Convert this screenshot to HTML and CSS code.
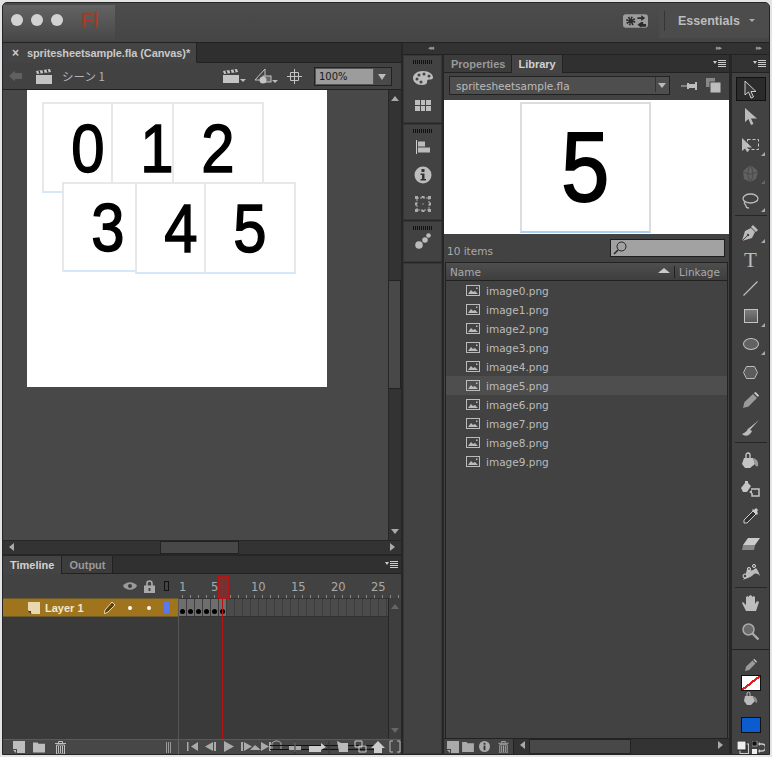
FILE: index.html
```html
<!DOCTYPE html>
<html lang="en">
<head>
    <meta charset="UTF-8">
    <title>Flash Professional</title>
    <link rel="stylesheet" href="styles.css">
</head>
<body>
<div class="window">
    <div class="titlebar">
        <div class="app-block">
            <span class="light"></span><span class="light"></span><span class="light"></span>
            <span class="app-logo">Fl</span>
        </div>
        <div class="title-fill"></div>
        <svg class="sync-icon" width="25" height="14" viewBox="0 0 26 14">
            <rect width="26" height="14" rx="3" fill="#9c9c9c"/>
            <circle cx="8" cy="7" r="3.6" fill="none" stroke="#2c2c2c" stroke-width="2.4" stroke-dasharray="1.6 1.2"/>
            <circle cx="8" cy="7" r="2.6" fill="#2c2c2c"/>
            <path d="M15 3h4V1l4 3-4 3V5h-4zM21 8v2h3v3h-5v1l-4-3 4-3z" fill="#2c2c2c"/>
        </svg>
        <div class="workspace">
            <span class="workspace-name">Essentials</span>
            <span class="workspace-caret"></span>
        </div>
    </div>

    <div class="main">
        <div class="left">
            <div class="doc-tabs">
                <div class="doc-tab"><span class="close">×</span>spritesheetsample.fla (Canvas)*</div>
            </div>
            <div class="doc-toolbar">
                <svg class="back" width="13" height="12" viewBox="0 0 13 12"><path d="M0 6l6-5.500V3h7v6H6v2.500z" fill="#606060"/></svg>
                <svg class="clapper" width="16" height="15" viewBox="0 0 16 15"><path d="M0 6h16v9H0z" fill="#c4c4c4"/><path d="M0 2l14-2 1 3L1 5z" fill="#c4c4c4"/><path d="M3 1.600l1 3M7 1l1 3M11 .4l1 3" stroke="#333" stroke-width="1.400"/></svg>
                <span class="scene-name">シーン 1</span>
                <div class="doc-tools">
                    <span class="drop">
                        <svg width="18" height="14" viewBox="0 0 16 14"><path d="M0 6h16v8H0z" fill="#c4c4c4"/><path d="M0 2l14-2 1 3L1 5z" fill="#c4c4c4"/><path d="M3 1.600l1 3M7 1l1 3M11 .4l1 3" stroke="#333" stroke-width="1.400"/></svg>
                    </span>
                    <span class="drop">
                        <svg width="18" height="16" viewBox="0 0 18 16"><path d="M1 12L11 1v11z" fill="none" stroke="#c4c4c4"/><rect x="9" y="8" width="8" height="6" fill="#666" stroke="#c4c4c4"/><circle cx="9" cy="12" r="3.500" fill="#c4c4c4"/></svg>
                    </span>
                    <svg class="crosshair" width="15" height="15" viewBox="0 0 15 15"><path d="M7.500 0v15M0 7.500h15M3.500 3.500h8v8h-8z" fill="none" stroke="#c4c4c4"/></svg>
                    <div class="zoom-box">
                        <span class="zoom-value">100%</span>
                        <span class="zoom-arrow"></span>
                    </div>
                </div>
            </div>

            <div class="stage-row">
                <div class="stage-area">
                    <div class="stage">
                        <div class="sprite sprite-0"><span class="digit">0</span></div>
                        <div class="sprite sprite-1"><span class="digit">1</span></div>
                        <div class="sprite sprite-2"><span class="digit">2</span></div>
                        <div class="sprite sprite-3"><span class="digit">3</span></div>
                        <div class="sprite sprite-4"><span class="digit">4</span></div>
                        <div class="sprite sprite-5"><span class="digit">5</span></div>
                    </div>
                </div>
                <div class="vscroll">
                    <span class="arrow-up"></span>
                    <span class="vscroll-thumb stage-thumb"></span>
                    <span class="arrow-down"></span>
                </div>
            </div>
            <div class="hscroll">
                <span class="arrow-left"></span>
                <span class="hscroll-thumb stage-hthumb"></span>
                <span class="arrow-right"></span>
            </div>

            <div class="timeline">
                <div class="panel-tabs">
                    <span class="panel-tab active">Timeline</span>
                    <span class="panel-tab">Output</span>
                    <span class="panel-menu"></span>
                </div>
                <div class="tl-header">
                    <div class="tl-header-icons">
                        <svg width="14" height="10" viewBox="0 0 14 10"><path d="M0 5C3 0 11 0 14 5 11 10 3 10 0 5z" fill="#9a9a9a"/><circle cx="7" cy="5" r="2" fill="#3a3a3a"/></svg>
                        <svg width="11" height="13" viewBox="0 0 11 13"><path d="M3 6V3.500a2.500 2.500 0 0 1 5 0V6" fill="none" stroke="#aaa" stroke-width="1.600"/><rect y="5.500" width="11" height="7.500" fill="#aaa"/><rect x="4.500" y="8" width="2" height="3" fill="#444"/></svg>
                        <span class="outline-icon"></span>
                    </div>
                    <div class="ruler">
                        <span class="ruler-first">1</span><span class="ruler-num">5</span><span class="ruler-num">10</span><span class="ruler-num">15</span><span class="ruler-num">20</span><span class="ruler-num">25</span>
                    </div>
                </div>
                <div class="tl-body">
                    <div class="layers">
                        <div class="layer-row">
                            <svg class="layer-icon" width="12" height="12" viewBox="0 0 12 12"><path d="M0 0h12v12H4L0 8z" fill="#e8d8b0"/><path d="M0 9h3v3z" fill="#3a3a3a"/></svg>
                            <span class="layer-name">Layer 1</span>
                            <svg class="layer-pencil" width="12" height="13" viewBox="0 0 12 13"><path d="M0 13l1-4 7-8 3 3-7 7z" fill="#5c4310" stroke="#e8d8b0"/></svg>
                            <span class="layer-dot first"></span>
                            <span class="layer-dot"></span>
                            <span class="layer-color"></span>
                        </div>
                    </div>
                    <div class="frames">
                        <div class="frame-row">
                            <span class="frame"></span><span class="frame"></span><span class="frame"></span>
                            <span class="frame"></span><span class="frame"></span><span class="frame"></span>
                        </div>
                    </div>
                    <div class="vscroll tl-scroll">
                        <span class="arrow-up dim"></span>
                        <span class="arrow-down dim"></span>
                    </div>
                    <div class="playhead"></div>
                </div>
                <div class="tl-footer">
                    <div class="tl-footer-left">
                        <svg width="12" height="12" viewBox="0 0 12 12"><path d="M0 0h12v12H4v-4H0z" fill="#bdbdbd"/><path d="M0 9h3v3z" fill="#bdbdbd"/></svg>
                        <svg width="12" height="11" viewBox="0 0 13 11"><path d="M0 0h5l1 1.500h7V11H0z" fill="#bdbdbd"/></svg>
                        <svg class="trash" width="11" height="13" viewBox="0 0 11 13"><path d="M3.500 2V.5h4V2M0 2.500h11M1.500 4h8v9h-8zM3.500 5v7M5.500 5v7M7.500 5v7" fill="none" stroke="#bdbdbd"/></svg>
                        <svg class="handle" width="5" height="11" viewBox="0 0 5 11"><path d="M.5 0v11M2.500 0v11M4.500 0v11" stroke="#999"/></svg>
                    </div>
                    <svg class="transport" width="222" height="16" viewBox="0 0 222 16">
                        <path d="M8 3h1.500v9H8zM19 3v9l-7-4.500z" fill="#aaa"/>
                        <path d="M26 7.500l8-4.500v9zM35 3h2v9h-2z" fill="#aaa"/>
                        <path d="M45 2l10 5.500L45 13z" fill="#aaa"/>
                        <path d="M62 3h2v9h-2zM65 3l8 4.500L65 12zM71 11l5-5 6 5zM82 3l8 4.500L82 12zM90 3h2v9h-2z" fill="#aaa"/>
                        <path d="M93 10V4l3-2h3l3 2v6" fill="none" stroke="#aaa"/>
                        <path d="M91 10.500h111" stroke="#111" stroke-width="1.200"/>
                        <path d="M91 6.500h111" stroke="#111"/>
                        <path d="M110 7h12v4h-12zM115.500 3h1v10h-1z" fill="#aaa"/>
                        <path d="M130 7h12V4l5 4-5 3v2h-12z" fill="#ccc"/>
                        <path d="M116 2v13M150 2v13" stroke="#333"/>
                        <path d="M158 2l4 2h7v9h-9z" fill="#bbb"/>
                        <path d="M176 2h7v6h-7zM180 7h7v6h-7z" fill="none" stroke="#ccc"/>
                        <path d="M192 9l7-7 7 7h-3v5h-8V9z" fill="#ccc"/>
                        <path d="M214 2h-3v11h3M218 2h3v11h-3" fill="none" stroke="#bbb"/>
                    </svg>
                </div>
            </div>
        </div>

        <div class="right">
            <div class="collapse-strip">
                <span class="chev chev-dock">◂◂</span>
                <span class="chev chev-lib">▸▸</span>
                <span class="chev chev-tools">▸▸</span>
            </div>
            <div class="panels">
                <div class="dock">
                    <div class="dock-group dock-group-a">
                        <span class="gripper"></span>
                        <svg width="20" height="14" viewBox="0 0 20 14"><path d="M10 0c6 0 10 3 10 6.500 0 2-2 2-4 2-2 0-2 1.500-2 3S12 14 9 14C3 14 0 10.500 0 7S4 0 10 0z" fill="#bdbdbd"/><g fill="#444"><circle cx="6" cy="4" r="1.500"/><circle cx="11" cy="3" r="1.500"/><circle cx="16" cy="5" r="1.500"/><circle cx="4" cy="8" r="1.500"/><circle cx="8" cy="11" r="1.500"/></g></svg>
                        <svg width="16" height="11" viewBox="0 0 16 11"><rect width="16" height="11" fill="#bdbdbd"/><path d="M5.500 0v11M10.500 0v11M0 5.500h16" stroke="#444"/></svg>
                    </div>
                    <div class="dock-group dock-group-b">
                        <span class="gripper"></span>
                        <svg width="14" height="14" viewBox="0 0 14 14"><path d="M.5 0v14" stroke="#ccc"/><rect x="2" y="1.500" width="7" height="5" fill="#bbb"/><rect x="2" y="7.500" width="12" height="5" fill="#bbb"/></svg>
                        <svg width="18" height="18" viewBox="0 0 18 18"><circle cx="9" cy="9" r="8.500" fill="#bdbdbd"/><rect x="7.500" y="3" width="3" height="3" fill="#333"/><path d="M6.500 7.500h4V13h1.500v1.500H6.500V13H8V9H6.500z" fill="#333"/></svg>
                        <svg width="16" height="16" viewBox="0 0 16 16"><rect x="2" y="2" width="12" height="12" fill="none" stroke="#aaa" stroke-dasharray="2 1"/><path d="M0 0h3v3H0zM13 0h3v3h-3zM0 13h3v3H0zM13 13h3v3h-3zM6.500 0h3v2h-3zM6.500 14h3v2h-3zM0 6.500h2v3H0zM14 6.500h2v3h-2z" fill="#aaa"/><rect x="7.500" y="7.500" width="1" height="1" fill="#ddd"/></svg>
                    </div>
                    <div class="dock-group dock-group-c">
                        <span class="gripper"></span>
                        <svg width="16" height="16" viewBox="0 0 16 16"><circle cx="4" cy="12" r="3.800" fill="#bbb"/><circle cx="10" cy="7" r="2.800" fill="#bbb"/><circle cx="13.500" cy="2.500" r="2.300" fill="#bbb"/></svg>
                    </div>
                    <div class="dock-group dock-rest"></div>
                </div>

                <div class="library">
                    <div class="panel-tabs">
                        <span class="panel-tab">Properties</span>
                        <span class="panel-tab active">Library</span>
                        <span class="panel-menu"></span>
                    </div>
                    <div class="lib-select-row">
                        <div class="lib-select">
                            <span class="lib-select-name">spritesheetsample.fla</span>
                            <span class="lib-select-arrow"></span>
                        </div>
                        <svg width="16" height="8" viewBox="0 0 16 8"><path d="M0 3.500h6v1H0zM6 1h2v6H6zM8 2h6v4H8zM14 0h2v8h-2z" fill="#bdbdbd"/></svg>
                        <svg width="15" height="15" viewBox="0 0 15 15"><rect width="9" height="9" fill="#888"/><rect x="4" y="4" width="11" height="11" fill="#bdbdbd" stroke="#444"/></svg>
                    </div>
                    <div class="lib-preview">
                        <div class="preview-sprite"><span class="digit">5</span></div>
                    </div>
                    <div class="lib-count-row">
                        <span class="lib-count">10 items</span>
                        <div class="lib-search">
                            <svg width="14" height="14" viewBox="0 0 14 14"><circle cx="8.500" cy="5.500" r="4.500" fill="none" stroke="#222"/><path d="M5 9l-4 4" stroke="#222" stroke-width="1.500"/></svg>
                        </div>
                    </div>
                    <div class="lib-list">
                        <div class="lib-head">
                            <span class="lib-head-name">Name</span>
                            <span class="sort-arrow"></span>
                            <span class="lib-head-link">Linkage</span>
                        </div>
                        <div class="lib-items" id="lib-items"></div>
                    </div>
                    <div class="lib-footer">
                        <svg width="12" height="12" viewBox="0 0 12 12"><path d="M0 0h12v12H4v-4H0z" fill="#aaa"/><path d="M0 9h3v3z" fill="#aaa"/></svg>
                        <svg class="lib-folder" width="12" height="10" viewBox="0 0 13 11"><path d="M0 0h5l1 1.500h7V11H0z" fill="#aaa"/></svg>
                        <svg width="11" height="11" viewBox="0 0 18 18"><circle cx="9" cy="9" r="9" fill="#aaa"/><rect x="7.500" y="3" width="3" height="3" fill="#333"/><rect x="7.500" y="7.500" width="3" height="7.500" fill="#333"/></svg>
                        <svg class="lib-trash" width="11" height="12" viewBox="0 0 11 13"><path d="M3.500 2V.5h4V2M0 2.500h11M1.500 4h8v9h-8zM3.500 5v7M5.500 5v7M7.500 5v7" fill="none" stroke="#aaa"/></svg>
                        <div class="hscroll lib-hscroll">
                            <span class="arrow-left"></span>
                            <span class="hscroll-thumb lib-hthumb"></span>
                            <span class="arrow-right"></span>
                        </div>
                    </div>
                </div>

                <div class="tools">
                    <div class="tools-head"><span class="panel-menu"></span></div>
                    <div class="tool active">
                        <svg width="13" height="19" viewBox="0 0 13 19"><path d="M1 1v14l3.500-3 2.500 6 2.500-1-2.500-5.500H12z" fill="#3a3a3a" stroke="#ccc"/></svg>
                    </div>
                    <div class="tool"><svg width="12" height="18" viewBox="0 0 12 18"><path d="M0 0v14l3.500-3 2.500 6 2.500-1L6 10.500h6z" fill="#bbb"/></svg></div>
                    <div class="tool corner">
                        <svg width="18" height="14" viewBox="0 0 18 14"><path d="M0 0v13l3-2.500L5 14l2-1-2-3.500h5z" fill="#bbb"/><rect x="5.500" y="1.500" width="11" height="10" fill="none" stroke="#ccc" stroke-dasharray="3 2"/></svg>
                    </div>
                    <div class="tool corner dim-corner">
                        <svg width="15" height="17" viewBox="0 0 15 17"><path d="M7.500 0L15 6l-2 8-5.500 3L1 14 0 6z" fill="#616161"/><path d="M0 6c4 4 10 4 15 0M7.500 0C4 5 4 12 7.500 17M7.500 0c3 5 3 12 0 17" fill="none" stroke="#4a4a4a"/></svg>
                    </div>
                    <div class="tool corner">
                        <svg width="17" height="16" viewBox="0 0 17 16"><ellipse cx="8.500" cy="5.500" rx="7.500" ry="4.500" fill="none" stroke="#bbb" stroke-width="1.300"/><path d="M3 9c-2 2 1 2 1 4 0 1.500 2 2 3 2" fill="none" stroke="#bbb" stroke-width="1.300"/></svg>
                    </div>
                    <div class="tool-sep after-select"></div>
                    <div class="tool corner">
                        <svg width="17" height="17" viewBox="0 0 17 17"><path d="M0 17L3 7l6-3 4 4-3 6z" fill="#bbb"/><path d="M11 1l5 5-2 2-5-5z" fill="#bbb"/><path d="M0 17l5-5" stroke="#444"/><circle cx="6" cy="11" r="1.200" fill="#444"/></svg>
                    </div>
                    <div class="tool"><span class="tool-text">T</span></div>
                    <div class="tool"><svg width="15" height="15" viewBox="0 0 15 15"><path d="M.5 14.500l14-14" stroke="#bbb" stroke-width="1.300"/></svg></div>
                    <div class="tool corner"><span class="rect-tool"></span></div>
                    <div class="tool corner"><span class="oval-tool"></span></div>
                    <div class="tool"><svg width="15" height="13" viewBox="0 0 15 13"><path d="M3.500.5h8L14.500 6.500l-3 6h-8l-3-6z" fill="#5c5c5c" stroke="#bbb"/></svg></div>
                    <div class="tool"><svg width="16" height="16" viewBox="0 0 16 16"><path d="M0 16l1.500-6L10 2l4 4-8.500 8.500z" fill="#9a9a9a"/><path d="M11 1l1.500-1L16 3.500 15 5z" fill="#d4d4d4"/></svg></div>
                    <div class="tool"><svg width="18" height="17" viewBox="0 0 18 17"><path d="M17 0L8 10l-2-1z" fill="#bbb"/><path d="M6 8.500c-1 3-3 4-6 5.500 3 3 8 2 10-3z" fill="#bbb"/></svg></div>
                    <div class="tool-sep after-draw"></div>
                    <div class="tool"><svg width="17" height="17" viewBox="0 0 17 17"><path d="M4 6V3a2 2 0 0 1 4 0v3" fill="none" stroke="#ccc" stroke-width="1.300"/><path d="M2 6h9l2 6-5 4H3L0 12z" fill="#c4c4c4"/><path d="M11 6c4 1 6 4 5 8-1 1-3 0-3-2z" fill="#999"/></svg></div>
                    <div class="tool"><svg width="19" height="17" viewBox="0 0 19 17"><path d="M4 3V1h3v2l3 3-4 6H2L0 8z" fill="#c4c4c4"/><path d="M10 9h8v7h-7v-3" fill="none" stroke="#c4c4c4" stroke-width="1.500"/><path d="M8 12l3-2v4z" fill="#c4c4c4"/></svg></div>
                    <div class="tool"><svg width="16" height="16" viewBox="0 0 16 16"><path d="M10 3L13 6 4 15H1v-3z" fill="#333" stroke="#ccc"/><path d="M9 2l5 5 1-2-1-1 1-2-2-2-2 2-1-1z" fill="#ccc"/></svg></div>
                    <div class="tool"><svg width="18" height="12" viewBox="0 0 18 12"><path d="M6 0h12l-5 7H1z" fill="#ccc"/><path d="M1 7h12l-1 5H0z" fill="#888"/></svg></div>
                    <div class="tool"><svg width="18" height="17" viewBox="0 0 18 17"><path d="M1 16C4 12 4 7 6 3c2 3 3 4 5 3l3-2c2 2 3 5 4 8-3-3-5-3-7-1-3 3-6 3-10 5z" fill="#bbb"/><circle cx="3" cy="12" r="2" fill="#444" stroke="#ddd"/><circle cx="7" cy="5" r="1.500" fill="#444" stroke="#ddd"/><circle cx="12" cy="2" r="1.500" fill="#444" stroke="#ddd"/></svg></div>
                    <div class="tool-sep after-edit"></div>
                    <div class="tool"><svg width="17" height="17" viewBox="0 0 17 17"><path d="M4 16L0 8l1-1 3 3V2l1.500-1L7 2v6V1l1.500-1L10 1v7V2l1.500-1L13 2v7l2-3 2 1-3 9z" fill="#bdbdbd"/></svg></div>
                    <div class="tool"><svg width="17" height="17" viewBox="0 0 17 17"><circle cx="6.500" cy="6.500" r="5.500" fill="#6a6a6a" stroke="#aaa" stroke-width="1.500"/><path d="M10.500 10.500l6 6" stroke="#aaa" stroke-width="2.400"/></svg></div>
                    <div class="tool-sep black"></div>
                    <div class="color-tool stroke-tool">
                        <svg width="12" height="12" viewBox="0 0 16 16"><path d="M0 16l1.500-6L10 2l4 4-8.500 8.500z" fill="#9a9a9a"/><path d="M11 1l1.500-1L16 3.500 15 5z" fill="#d4d4d4"/></svg>
                        <span class="swatch stroke-swatch"></span>
                    </div>
                    <div class="color-tool fill-tool">
                        <svg width="14" height="14" viewBox="0 0 14 14"><path d="M3 5V2a2 2 0 0 1 3 0v3" fill="none" stroke="#bbb"/><path d="M1 5h8l2 5-4 4H3L0 10z" fill="#bbb"/><path d="M9 5c3 1 5 3 4 7-1 0-2-1-2-2z" fill="#888"/></svg>
                        <span class="swatch fill-swatch"></span>
                    </div>
                    <div class="color-footer">
                        <svg width="12" height="13" viewBox="0 0 12 13"><rect x="3" y="3" width="8.500" height="9.500" fill="none" stroke="#ccc"/><rect width="9" height="9" fill="#eee" stroke="#222"/></svg>
                        <svg width="13" height="14" viewBox="0 0 13 14"><rect width="5" height="5" fill="#111" stroke="#ccc" stroke-width=".6"/><rect y="8" width="5" height="6" fill="#eee"/><path d="M7 3h3a3 3 0 0 1 0 7H7" fill="none" stroke="#ccc" stroke-width="1.400"/><path d="M6 3l2-2v4zM6 10l2-2v4z" fill="#ccc"/></svg>
                    </div>
                </div>
            </div>
        </div>
    </div>
</div>

<script>
    // library rows
    var list = document.getElementById('lib-items');
    for (var i = 0; i < 10; i++) {
        var row = document.createElement('div');
        row.className = i === 5 ? 'lib-item selected' : 'lib-item';
        row.innerHTML = '<svg width="14" height="11" viewBox="0 0 14 11"><rect x=".5" y=".5" width="13" height="10" fill="none" stroke="#bbb"/><path d="M2 9l3-4 2 2 2-1 3 3z" fill="#bbb"/><rect x="10" y="2.500" width="1.500" height="1.500" fill="#bbb"/></svg>' +
            '<span>image' + i + '.png</span>';
        list.appendChild(row);
    }
</script>
</body>
</html>
```

FILE: styles.css
```css
* {
    box-sizing: border-box;
}

html, body {
    margin: 0;
    height: 757px;
    overflow: hidden;
}

body {
    background: #e4e4e4;
    padding: 2px;
    font-family: "DejaVu Sans", sans-serif;
    font-size: 10.5px;
    color: #bdbdbd;
}

.window {
    width: 768px;
    height: 753px;
    border: 1px solid #262626;
    border-radius: 5px 5px 0 0;
    background: #262626;
    overflow: hidden;
    display: flex;
    flex-direction: column;
}

/* title bar */
.titlebar {
    height: 40px;
    flex: none;
    display: flex;
    align-items: flex-start;
    background: linear-gradient(#4c4c4c, #454545);
    border-bottom: 1px solid #222;
}

.app-block {
    width: 112px;
    height: 35px;
    margin-top: 2px;
    padding-left: 8px;
    display: flex;
    align-items: center;
    gap: 8px;
    background: linear-gradient(#636363, #484848);
}

.light {
    width: 12px;
    height: 12px;
    margin-top: -5px;
    border-radius: 50%;
    background: #d2d2d2;
}

.app-logo {
    margin-left: 10px;
    margin-top: -5px;
    font-family: "Liberation Sans", sans-serif;
    font-size: 21px;
    color: #a63a22;
    -webkit-text-stroke: 0.5px #a63a22;
}

.title-fill {
    flex: 1;
}

.sync-icon {
    margin-top: 11px;
    margin-right: 11px;
}

.workspace {
    width: 110px;
    height: 35px;
    display: flex;
    align-items: center;
    padding: 0 0 0 19px;
    position: relative;
    background: #4c4c4c;
}

.workspace::before {
    content: "";
    position: absolute;
    left: 5px;
    top: 8px;
    height: 20px;
    border-left: 1px solid #363636;
}

.workspace-name {
    font-family: "Liberation Sans", sans-serif;
    font-size: 12.5px;
    font-weight: bold;
    color: #bcbcbc;
}

.workspace-caret {
    margin-left: 9px;
    margin-top: 3px;
    border: 3px solid transparent;
    border-top-color: #aaa;
}

.main {
    flex: 1;
    display: flex;
    min-height: 0;
}

/* left column */
.left {
    width: 398px;
    flex: none;
    display: flex;
    flex-direction: column;
    margin-right: 2px;
}

.doc-tabs {
    height: 20px;
    flex: none;
    background: #2f2f2f;
    border-bottom: 1px solid #222;
}

.doc-tab {
    width: 194px;
    height: 20px;
    padding-left: 9px;
    display: flex;
    align-items: center;
    gap: 8px;
    background: #444;
    border-right: 1px solid #222;
    border-bottom: 1px solid #444;
    font-family: "Liberation Sans", sans-serif;
    font-size: 11px;
    font-weight: bold;
    letter-spacing: -0.1px;
    color: #c8c8c8;
    white-space: nowrap;
}

.close {
    font-size: 12px;
    color: #ccc;
}

.doc-toolbar {
    height: 27px;
    flex: none;
    display: flex;
    align-items: center;
    padding-left: 6px;
    background: #424242;
    border-bottom: 1px solid #222;
}

.clapper {
    margin-left: 14px;
}

.scene-name {
    margin-left: 10px;
    font-family: "Noto Sans CJK JP", "DejaVu Sans", sans-serif;
    font-size: 11.5px;
    color: #b4b4b4;
}

.doc-tools {
    margin-left: auto;
    margin-right: 9px;
    display: flex;
    align-items: center;
}

.drop {
    position: relative;
    margin-right: 14px;
    display: flex;
}

.drop::after {
    content: "";
    position: absolute;
    right: -6px;
    bottom: -2px;
    border: 3px solid transparent;
    border-top-color: #bbb;
}

.crosshair {
    margin-left: 1px;
}

.zoom-box {
    width: 78px;
    height: 19px;
    margin-left: 12px;
    display: flex;
    border: 1px solid #222;
}

.zoom-value {
    flex: 1;
    padding-left: 3px;
    background: #9c9c9c;
    color: #1a1a1a;
    font-size: 10px;
    line-height: 16px;
    border: 1px solid #555;
}

.zoom-arrow {
    width: 17px;
    background: #4a4a4a;
    position: relative;
}

.zoom-arrow::after {
    content: "";
    position: absolute;
    left: 4px;
    top: 6px;
    border: 4px solid transparent;
    border-top: 6px solid #bbb;
}

.stage-row {
    height: 450px;
    flex: none;
    display: flex;
}

.stage-area {
    flex: 1;
    background: #484848;
    padding-left: 24px;
}

.stage {
    width: 300px;
    height: 297px;
    background: #fff;
    position: relative;
}

.sprite {
    position: absolute;
    width: 92px;
    height: 91px;
    display: flex;
    align-items: center;
    justify-content: center;
    background: #fff;
    border: 2px solid #e8e8e8;
    border-bottom-color: #d6e8f8;
    font-family: "Liberation Sans", sans-serif;
    font-size: 68px;
    color: #000;
    -webkit-text-stroke: 1.5px #000;
}

.digit {
    display: inline-block;
    transform: scaleX(0.88);
}

.sprite-0 { left: 15px; top: 12px; }
.sprite-1 { left: 84px; top: 12px; }
.sprite-2 { left: 145px; top: 12px; }
.sprite-3 { left: 35px; top: 92px; height: 90px; }
.sprite-4 { left: 108px; top: 92px; height: 92px; }
.sprite-5 { left: 177px; top: 92px; height: 92px; }

/* scrollbars */
.vscroll {
    width: 13px;
    flex: none;
    display: flex;
    flex-direction: column;
    align-items: center;
    background: #333;
    border-left: 1px solid #262626;
    position: relative;
}

.vscroll-thumb {
    width: 100%;
    background: #484848;
    border: 1px solid #222;
    border-left: 0;
}

.stage-thumb {
    position: absolute;
    top: 190px;
    height: 109px;
}

.arrow-up, .arrow-down {
    position: absolute;
    border: 4px solid transparent;
}

.arrow-up {
    top: 2px;
    border-bottom: 5px solid #aaa;
}

.arrow-down {
    bottom: 2px;
    border-top: 5px solid #aaa;
}

.arrow-up.dim {
    border-bottom-color: #666;
}

.arrow-down.dim {
    border-top-color: #666;
}

.hscroll {
    height: 14px;
    flex: none;
    background: #333;
    border-top: 1px solid #262626;
    position: relative;
}

.hscroll-thumb {
    position: absolute;
    top: 0;
    height: 100%;
    background: #484848;
    border: 1px solid #222;
}

.stage-hthumb {
    left: 157px;
    width: 79px;
}

.arrow-left, .arrow-right {
    position: absolute;
    top: 2px;
    border: 4px solid transparent;
}

.arrow-left {
    left: 2px;
    border-right: 5px solid #aaa;
}

.arrow-right {
    right: 2px;
    border-left: 5px solid #aaa;
}

/* timeline */
.timeline {
    flex: 1;
    margin-top: 2px;
    display: flex;
    flex-direction: column;
    min-height: 0;
}

.panel-tabs {
    height: 18px;
    flex: none;
    display: flex;
    background: #303030;
    border-bottom: 1px solid #222;
    position: relative;
}

.panel-tab {
    padding: 0 7px;
    display: flex;
    align-items: center;
    font-family: "Liberation Sans", sans-serif;
    font-size: 11px;
    font-weight: bold;
    color: #999;
    background: #3c3c3c;
    border-right: 1px solid #222;
}

.panel-tab.active {
    height: 18px;
    background: #444;
    color: #d2d2d2;
}

.library .panel-tab {
    padding: 0 6px;
}

.library .panel-tab:first-child {
    padding-left: 7px;
}

.panel-menu {
    position: absolute;
    right: 3px;
    top: 5px;
    width: 8px;
    height: 7px;
    background: repeating-linear-gradient(#ccc 0, #ccc 1px, transparent 1px, transparent 2px);
}

.panel-menu::before {
    content: "";
    position: absolute;
    left: -5px;
    top: 1px;
    border: 2px solid transparent;
    border-top: 3px solid #ccc;
}

.tl-header {
    height: 24px;
    flex: none;
    display: flex;
    background: #424242;
}

.tl-header-icons {
    width: 176px;
    flex: none;
    padding-right: 10px;
    display: flex;
    align-items: center;
    justify-content: flex-end;
    gap: 7px;
}

.outline-icon {
    width: 5px;
    height: 10px;
    margin-left: 2px;
    border: 1px solid #111;
}

.ruler {
    flex: 1;
    min-width: 0;
    display: flex;
    align-items: flex-start;
    padding-top: 6px;
    font-size: 11.5px;
    color: #aaa;
    background: repeating-linear-gradient(90deg, #888 0, #888 1px, transparent 1px, transparent 8px) 3px 100% / 100% 3px no-repeat;
}

.ruler-first {
    width: 32px;
    flex: none;
}

.ruler-num {
    width: 40px;
    flex: none;
}

.tl-body {
    flex: 1;
    display: flex;
    position: relative;
    background: #3a3a3a;
    min-height: 0;
}

.layers {
    width: 176px;
    flex: none;
    border-right: 1px solid #555;
}

.layer-row {
    height: 19px;
    display: flex;
    align-items: center;
    padding-left: 25px;
    background: #a0741c;
    border-bottom: 1px solid #6b5a2c;
    border-top: 1px solid #6b5a2c;
}

.layer-name {
    width: 59px;
    margin-left: 5px;
    font-family: "Liberation Sans", sans-serif;
    font-size: 11px;
    font-weight: bold;
    color: #f1e8d2;
}

.layer-dot {
    width: 4px;
    height: 4px;
    margin-left: 15px;
    border-radius: 50%;
    background: #fff;
}

.layer-dot.first {
    margin-left: 12px;
}

.layer-color {
    width: 5px;
    height: 11px;
    margin-left: 13px;
    background: #5a78f0;
}

.frames {
    flex: 1;
    min-width: 0;
}

.frame-row {
    height: 19px;
    display: flex;
    background: repeating-linear-gradient(90deg, #4b4b4b 0, #4b4b4b 7px, #3d3d3d 7px, #3d3d3d 8px);
    border-top: 1px solid #333;
    border-bottom: 1px solid #333;
}

.frame {
    width: 8px;
    height: 100%;
    background: #6e6e6e;
    border-right: 1px solid #3d3d3d;
    position: relative;
}

.frame::after {
    content: "";
    position: absolute;
    left: 1px;
    bottom: 2px;
    width: 5px;
    height: 5px;
    border-radius: 50%;
    background: #000;
}

.tl-scroll {
    background: #3e3e3e;
}

.playhead {
    position: absolute;
    left: 219px;
    top: -22px;
    bottom: 0;
    width: 1px;
    background: #b51414;
}

.playhead::before {
    content: "";
    position: absolute;
    left: -4px;
    top: 0;
    width: 9px;
    height: 21px;
    background: rgba(120, 50, 50, 0.9);
    border: 1px solid #b51414;
}

.tl-footer {
    height: 15px;
    flex: none;
    display: flex;
    align-items: center;
    background: #474747;
    border-top: 1px solid #5a5a5a;
}

.tl-footer-left {
    width: 176px;
    height: 100%;
    flex: none;
    padding-left: 10px;
    display: flex;
    align-items: center;
    gap: 8px;
    border-right: 1px solid #666;
}

.trash {
    margin-left: 2px;
}

.handle {
    margin-left: 92px;
}

.transport {
    flex: none;
}

/* right side */
.right {
    flex: 1;
    display: flex;
    flex-direction: column;
    min-width: 0;
}

.collapse-strip {
    height: 12px;
    flex: none;
    display: flex;
    background: #323232;
    border-bottom: 1px solid #222;
    font-size: 7px;
    line-height: 11px;
    color: #999;
    position: relative;
}

.chev {
    position: absolute;
    top: 0;
    letter-spacing: -1px;
}

.chev-dock { left: 25px; }
.chev-lib { left: 313px; }
.chev-tools { left: 353px; }

.panels {
    flex: 1;
    display: flex;
    min-height: 0;
}

.dock {
    width: 39px;
    flex: none;
    margin-right: 2px;
    display: flex;
    flex-direction: column;
    gap: 1px;
}

.dock-group {
    display: flex;
    flex-direction: column;
    align-items: center;
    background: #424242;
    border: 1px solid #363636;
    padding-top: 4px;
}

.gripper {
    width: 20px;
    height: 4px;
    background: repeating-linear-gradient(90deg, #111 0, #111 1px, transparent 1px, transparent 2px);
}

.dock-group-a {
    height: 68px;
    gap: 15px;
}

.dock-group-a .gripper {
    margin-bottom: -8px;
}

.dock-group-b {
    height: 96px;
    gap: 12px;
}

.dock-group-b .gripper {
    margin-bottom: -5px;
}

.dock-group-c {
    height: 41px;
    gap: 3px;
}

.dock-rest {
    flex: 1;
}

.library {
    width: 285px;
    flex: none;
    display: flex;
    flex-direction: column;
    background: #424242;
}

.lib-select-row {
    height: 27px;
    flex: none;
    padding: 0 6px 2px 5px;
    display: flex;
    align-items: center;
    gap: 9px;
}

.lib-select {
    width: 221px;
    height: 19px;
    margin-right: 2px;
    display: flex;
    align-items: center;
    padding-left: 6px;
    background: #4e4e4e;
    border: 1px solid #222;
    position: relative;
}

.lib-select-name {
    color: #bbb;
}

.lib-select-arrow {
    position: absolute;
    right: 3px;
    top: 6px;
    border: 4px solid transparent;
    border-top: 5px solid #bbb;
}

.lib-select-arrow::before {
    content: "";
    position: absolute;
    left: -7px;
    top: -11px;
    height: 15px;
    border-left: 1px solid #333;
}

.lib-preview {
    height: 134px;
    flex: none;
    display: flex;
    justify-content: center;
    padding-top: 2px;
    background: #fff;
}

.preview-sprite {
    width: 131px;
    height: 131px;
    margin-right: 2px;
    display: flex;
    align-items: center;
    justify-content: center;
    border: 2px solid #dcdcdc;
    border-bottom: 2px solid #a8d0f2;
    font-family: "Liberation Sans", sans-serif;
    font-size: 98px;
    color: #000;
    -webkit-text-stroke: 2px #000;
}

.lib-count-row {
    height: 28px;
    flex: none;
    display: flex;
    align-items: center;
    padding-left: 3px;
}

.lib-count {
    margin-top: 6px;
    color: #aaa;
}

.lib-search {
    width: 115px;
    height: 18px;
    margin-left: auto;
    margin-right: 4px;
    padding-left: 2px;
    display: flex;
    align-items: center;
    background: #a2a2a2;
    border: 1px solid #1e1e1e;
}

.lib-list {
    flex: 1;
    display: flex;
    flex-direction: column;
    border: 1px solid #222;
    border-top: 0;
    border-bottom: 0;
    margin: 0 1px;
    min-height: 0;
}

.lib-head {
    height: 19px;
    flex: none;
    display: flex;
    align-items: center;
    padding: 0 7px 0 4px;
    background: linear-gradient(#4e4e4e, #3e3e3e);
    border-top: 1px solid #222;
    border-bottom: 1px solid #222;
    color: #aaa;
}

.sort-arrow {
    margin-left: auto;
    margin-bottom: 3px;
    border: 6px solid transparent;
    border-top: 0;
    border-bottom: 5px solid #c8c8c8;
}

.lib-head-link {
    margin-left: 4px;
    padding-left: 4px;
    border-left: 1px solid #222;
}

.lib-items {
    flex: 1;
}

.lib-item {
    height: 19px;
    padding-left: 20px;
    display: flex;
    align-items: center;
    gap: 6px;
    color: #bbb;
}

.lib-item.selected {
    background: #4e4e4e;
}

.lib-footer {
    height: 16px;
    flex: none;
    padding-left: 3px;
    display: flex;
    align-items: center;
    gap: 5px;
    background: #424242;
    border-top: 1px solid #222;
}

.lib-folder {
    margin-left: -2px;
}

.lib-trash {
    margin-left: 3px;
}

.lib-hscroll {
    flex: 1;
    height: 15px;
    margin-left: -1px;
    border-top: 0;
    border-left: 1px solid #222;
}

.lib-hthumb {
    left: 15px;
    width: 102px;
}

.tools {
    width: 37px;
    margin-left: 3px;
    flex: none;
    display: flex;
    flex-direction: column;
    align-items: center;
    background: #424242;
}

.tools-head {
    width: 100%;
    height: 18px;
    flex: none;
    margin-bottom: 4px;
    background: #333;
    border-bottom: 1px solid #222;
    position: relative;
}

.tool {
    width: 30px;
    height: 28px;
    flex: none;
    display: flex;
    align-items: center;
    justify-content: center;
    position: relative;
}

.tool.active {
    height: 24px;
    margin-bottom: 2px;
    background: #2b2b2b;
    border: 1px solid #111;
}

.tool.corner::after {
    content: "";
    position: absolute;
    right: 1px;
    bottom: 3px;
    border: 2px solid transparent;
    border-right-color: #aaa;
    border-bottom-color: #aaa;
}

.tool.dim-corner::after {
    border-right-color: #666;
    border-bottom-color: #666;
}

.tool-sep {
    width: 32px;
    height: 1px;
    flex: none;
    background: #262626;
}

.tool-sep.after-select {
    margin-bottom: 2px;
}

.tool-sep.after-draw {
    margin-bottom: 3px;
}

.tool-sep.after-edit {
    margin-top: 1px;
    margin-bottom: 1px;
}

.tool-sep.black {
    width: 100%;
    margin-top: 4px;
    background: #222;
}

.tool-text {
    font-family: "Liberation Serif", serif;
    font-size: 21px;
    color: #bbb;
}

.rect-tool {
    width: 14px;
    height: 14px;
    background: linear-gradient(#7c7c7c, #585858);
    border: 1px solid #c4c4c4;
}

.oval-tool {
    width: 16px;
    height: 12px;
    border-radius: 50%;
    background: #626262;
    border: 1px solid #c4c4c4;
}

.color-tool {
    display: flex;
    flex-direction: column;
    align-items: center;
}

.stroke-tool {
    margin-top: 9px;
    gap: 4px;
}

.fill-tool {
    gap: 12px;
}

.swatch {
    width: 20px;
    height: 16px;
    border: 1px solid #111;
}

.stroke-swatch {
    background: linear-gradient(to bottom right, #fff 45%, #e02020 45%, #e02020 55%, #fff 55%);
}

.fill-swatch {
    background: #0c5bcf;
}

.color-footer {
    margin-top: 8px;
    display: flex;
    gap: 3px;
}
```
